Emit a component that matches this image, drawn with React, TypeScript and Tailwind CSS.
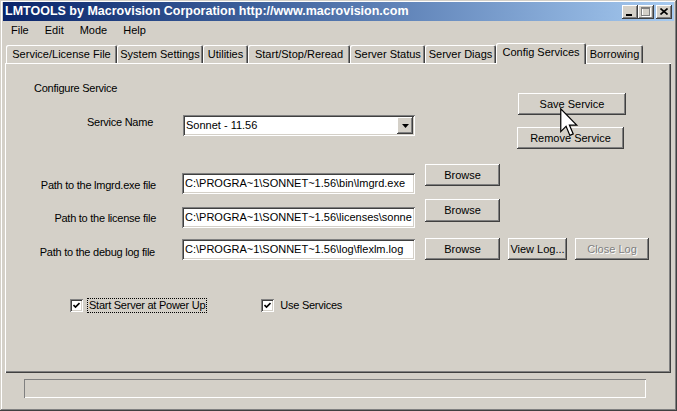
import React from 'react';

// classic win32 bevels
const raised = "shadow-[inset_-1px_-1px_#404040,inset_1px_1px_#ffffff,inset_-2px_-2px_#808080,inset_2px_2px_#d4d0c8]";
const sunken = "shadow-[inset_1px_1px_#808080,inset_-1px_-1px_#ffffff,inset_2px_2px_#404040,inset_-2px_-2px_#d4d0c8]";

type BtnProps = { className: string; children: React.ReactNode; disabled?: boolean };

function Btn({ className, children, disabled }: BtnProps) {
  return (
    <div className={`${raised} ${className} shrink-0 flex items-center justify-center bg-[#d4d0c8] leading-none`}>
      <span className={disabled ? "text-[#808080] [text-shadow:1px_1px_0_#ffffff]" : ""}>{children}</span>
    </div>
  );
}

function Field({ text }: { text: string }) {
  return (
    <div className={`${sunken} w-[233px] h-[21px] shrink-0 bg-white flex items-center pl-[3px] pr-[2px] overflow-hidden whitespace-nowrap`}>
      {text}
    </div>
  );
}

function Check({ label, focused }: { label: string; focused?: boolean }) {
  return (
    <div className="flex items-center">
      <div className={`${sunken} w-[13px] h-[13px] bg-white flex items-center justify-center`}>
        <svg width="7" height="7" viewBox="0 0 7 7">
          <polyline points="0.5,3 2.5,5 6.5,1" fill="none" stroke="#000" strokeWidth="1.6" />
        </svg>
      </div>
      <span className={`ml-[4px] px-[1px] leading-[13px] tracking-[-0.25px] border ${focused ? "border-dotted border-black" : "border-transparent"}`}>
        {label}
      </span>
    </div>
  );
}

const tabs = [
  { label: "Service/License File", w: "w-[111px]" },
  { label: "System Settings", w: "w-[86px]" },
  { label: "Utilities", w: "w-[45px]" },
  { label: "Start/Stop/Reread", w: "w-[102px]" },
  { label: "Server Status", w: "w-[75px]" },
  { label: "Server Diags", w: "w-[71px]" },
  { label: "Config Services", w: "w-[90px]", active: true },
  { label: "Borrowing", w: "w-[57px]" },
];

export default function App() {
  return (
    <div className="relative w-[677px] h-[411px] overflow-hidden bg-[#d4d0c8] text-black text-[11px] font-['Liberation_Sans',Arial,sans-serif] flex flex-col px-[3px] pt-[2px] shadow-[inset_-1px_-1px_#404040,inset_1px_1px_#d4d0c8,inset_-2px_-2px_#808080,inset_2px_2px_#ffffff]">
      {/* Title bar */}
      <div className="h-[19px] flex items-center bg-gradient-to-r from-[#0a246a] to-[#a6caf0] pl-[2px] pr-[2px]">
        <span className="text-white font-bold text-[12.5px] leading-none whitespace-nowrap">
          LMTOOLS by Macrovision Corporation http://www.macrovision.com
        </span>
        <div className="ml-auto flex">
          <div className={`${raised} w-[16px] h-[14px] bg-[#d4d0c8] relative`}>
            <div className="absolute left-[4px] top-[9px] w-[6px] h-[2px] bg-black" />
          </div>
          <div className={`${raised} w-[16px] h-[14px] bg-[#d4d0c8] flex items-center justify-center`}>
            <svg width="10" height="10" viewBox="0 0 10 10">
              <rect x="1.5" y="1.5" width="8" height="8" fill="none" stroke="#ffffff" />
              <rect x="0.5" y="0.5" width="8" height="8" fill="none" stroke="#808080" />
              <line x1="0" y1="1.5" x2="9" y2="1.5" stroke="#808080" />
            </svg>
          </div>
          <div className={`${raised} ml-[2px] w-[16px] h-[14px] bg-[#d4d0c8] flex items-center justify-center`}>
            <svg width="8" height="7" viewBox="0 0 8 7">
              <path d="M0.5 0.5 L7.5 6.5 M7.5 0.5 L0.5 6.5" stroke="#000" strokeWidth="1.6" />
            </svg>
          </div>
        </div>
      </div>

      {/* Menu bar */}
      <div className="h-[18px] flex items-center">
        {["File", "Edit", "Mode", "Help"].map((m) => (
          <span key={m} className="px-2 leading-none">{m}</span>
        ))}
      </div>

      {/* Tabs */}
      <div className="mt-[4px] h-[20px] pl-[3px] flex items-end relative z-10">
        {tabs.map((t) =>
          t.active ? (
            <div
              key={t.label}
              className={`${t.w} h-[21px] -mb-[1px] pb-[3px] bg-[#d4d0c8] rounded-t-[2px] flex items-center justify-center shadow-[inset_1px_1px_#ffffff,inset_-1px_0_#404040,inset_-2px_0_#808080]`}
            >
              {t.label}
            </div>
          ) : (
            <div
              key={t.label}
              className={`${t.w} h-[18px] rounded-t-[2px] flex items-center justify-center shadow-[inset_1px_1px_#ffffff,inset_-1px_0_#404040,inset_-2px_0_#808080]`}
            >
              {t.label}
            </div>
          )
        )}
      </div>

      {/* Panel */}
      <div className="ml-[2px] w-[666px] h-[310px] flex flex-col shadow-[inset_1px_1px_#ffffff,inset_-1px_-1px_#404040,inset_-2px_-2px_#808080]">
        <div className="h-[101px] flex">
          <div className="w-[410px] flex flex-col">
            <div className="pl-[29px] mt-[19px] leading-[13px] tracking-[-0.25px]">Configure Service</div>
            <div className="mt-[20px] flex items-start">
              <div className="w-[148px] text-right mt-[1px] leading-[13px] tracking-[-0.25px]">Service Name</div>
              <div className={`${sunken} ml-[30px] w-[232px] h-[21px] bg-white flex items-center pl-[3px] pr-[2px]`}>
                <span className="flex-1">Sonnet - 11.56</span>
                <div className={`${raised} w-[16px] h-[17px] bg-[#d4d0c8] flex items-center justify-center`}>
                  <svg width="7" height="4" viewBox="0 0 7 4">
                    <path d="M0 0 H7 L3.5 4 Z" fill="#000" />
                  </svg>
                </div>
              </div>
            </div>
          </div>
          <div className="ml-[103px] flex flex-col">
            <Btn className="mt-[30px] w-[108px] h-[22px]">Save Service</Btn>
            <Btn className="mt-[12px] -ml-[1px] w-[107px] h-[22px]">Remove Service</Btn>
          </div>
        </div>

        <div className="h-[35px] flex items-start">
          <div className="w-[151px] text-right mt-[15px] leading-[13px] tracking-[-0.25px]">Path to the lmgrd.exe file</div>
          <div className="ml-[26px] mt-[9px]">
            <Field text="C:\PROGRA~1\SONNET~1.56\bin\lmgrd.exe" />
          </div>
          <Btn className="ml-[10px] w-[75px] h-[22px]">Browse</Btn>
        </div>

        <div className="h-[39px] flex items-start">
          <div className="w-[151px] text-right mt-[13px] leading-[13px] tracking-[-0.25px]">Path to the license file</div>
          <div className="ml-[26px] mt-[8px]">
            <Field text="C:\PROGRA~1\SONNET~1.56\licenses\sonne" />
          </div>
          <Btn className="ml-[10px] w-[75px] h-[23px]">Browse</Btn>
        </div>

        <div className="h-[22px] flex items-start">
          <div className="w-[150px] text-right mt-[8px] leading-[13px] tracking-[-0.25px]">Path to the debug log file</div>
          <div className="ml-[27px] mt-[1px]">
            <Field text="C:\PROGRA~1\SONNET~1.56\log\flexlm.log" />
          </div>
          <Btn className="ml-[10px] w-[75px] h-[22px]">Browse</Btn>
          <Btn className="ml-[8px] w-[59px] h-[22px]">View Log...</Btn>
          <Btn className="ml-[8px] w-[74px] h-[22px]" disabled>Close Log</Btn>
        </div>

        <div className="mt-[38px] pl-[65px] flex items-center">
          <Check label="Start Server at Power Up" focused />
          <div className="ml-[54px]">
            <Check label="Use Services" />
          </div>
        </div>
      </div>

      {/* Status bar */}
      <div className="mt-[6px] ml-[21px] w-[622px] h-[19px] shadow-[inset_1px_1px_#808080,inset_-1px_-1px_#ffffff]" />

      {/* Mouse pointer over Save Service */}
      <svg className="absolute left-[560px] top-[108px]" width="19" height="29" viewBox="0 0 12.5 19">
        <path
          d="M0.5 0.5 L0.5 15.5 L4 12 L6.5 18 L8.7 17 L6.2 11.2 L11 11.2 Z"
          fill="#ffffff"
          stroke="#000000"
          strokeWidth="0.8"
          strokeLinejoin="miter"
        />
      </svg>
    </div>
  );
}
